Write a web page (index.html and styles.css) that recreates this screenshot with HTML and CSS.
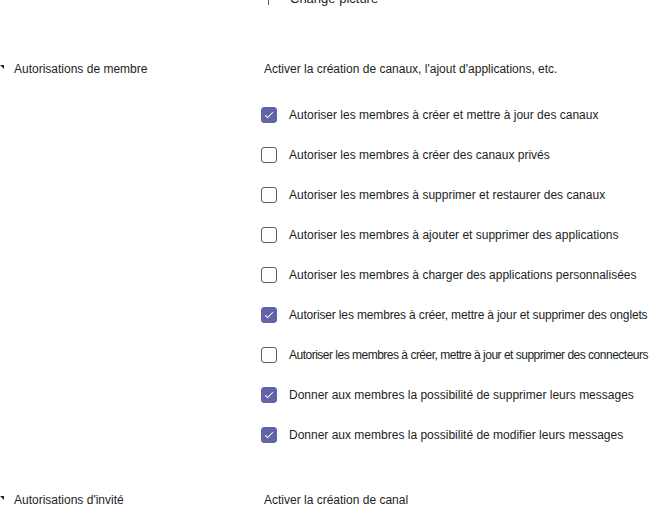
FILE: index.html
```html
<!DOCTYPE html>
<html lang="fr">
<head>
    <meta charset="UTF-8">
    <meta name="viewport" content="width=device-width, initial-scale=1.0">
    <title>Paramètres de l'équipe</title>
    <link rel="stylesheet" href="styles.css">
</head>
<body>
    <div class="picture-row">
        <span class="divider"></span>
        <span class="change-picture">Change picture</span>
    </div>

    <div class="settings-section">
        <div class="section-title">
            <span class="caret"></span>
            Autorisations de membre
        </div>
        <div class="section-body">
            <div class="section-desc">Activer la création de canaux, l'ajout d'applications, etc.</div>

            <label class="option"><input type="checkbox" checked><span class="box"></span><span>Autoriser les membres à créer et mettre à jour des canaux</span></label>
            <label class="option"><input type="checkbox"><span class="box"></span><span>Autoriser les membres à créer des canaux privés</span></label>
            <label class="option"><input type="checkbox"><span class="box"></span><span>Autoriser les membres à supprimer et restaurer des canaux</span></label>
            <label class="option"><input type="checkbox"><span class="box"></span><span>Autoriser les membres à ajouter et supprimer des applications</span></label>
            <label class="option"><input type="checkbox"><span class="box"></span><span>Autoriser les membres à charger des applications personnalisées</span></label>
            <label class="option"><input type="checkbox" checked><span class="box"></span><span class="tight">Autoriser les membres à créer, mettre à jour et supprimer des onglets</span></label>
            <label class="option"><input type="checkbox"><span class="box"></span><span class="tighter">Autoriser les membres à créer, mettre à jour et supprimer des connecteurs</span></label>
            <label class="option"><input type="checkbox" checked><span class="box"></span><span>Donner aux membres la possibilité de supprimer leurs messages</span></label>
            <label class="option"><input type="checkbox" checked><span class="box"></span><span>Donner aux membres la possibilité de modifier leurs messages</span></label>
        </div>
    </div>

    <div class="settings-section guest">
        <div class="section-title">
            <span class="caret"></span>
            Autorisations d'invité
        </div>
        <div class="section-body">
            <div class="section-desc">Activer la création de canal</div>
        </div>
    </div>
</body>
</html>
```

FILE: styles.css
```css
body {
    margin: 0;
    font-family: 'Liberation Sans', Arial, sans-serif;
    font-size: 12px;
    color: #201f1e;
    background-color: white;
    overflow: hidden;
}

.picture-row {
    display: flex;
    align-items: flex-start;
    height: 5px;
    margin-top: -8px;
    padding-left: 268px;
}

.divider {
    width: 1px;
    height: 13px;
    background-color: #605e5c;
}

.change-picture {
    margin-left: 21px;
    font-size: 13px;
    line-height: 13px;
}

.settings-section {
    display: flex;
    margin-top: 63px;
}

.settings-section.guest {
    margin-top: 36px;
}

.section-title {
    width: 264px;
    flex: 0 0 264px;
    display: flex;
    align-items: center;
    height: 18px;
}

.caret {
    width: 0;
    height: 0;
    margin: 0 10px 0 0;
    border-top: 4px solid #201f1e;
    border-left: 4px solid transparent;
    position: relative;
    top: -2px;
}

.section-body {
    flex: 1;
}

.section-desc {
    height: 18px;
    line-height: 18px;
    margin-bottom: 17px;
}

.option {
    display: flex;
    align-items: center;
    height: 40px;
    margin-left: -3px;
    white-space: nowrap;
}

.option input {
    display: none;
}

.tight {
    letter-spacing: -0.15px;
}

.tighter {
    letter-spacing: -0.5px;
}

.box {
    box-sizing: border-box;
    width: 16px;
    height: 16px;
    margin-right: 12px;
    border: 1px solid #605e5c;
    border-radius: 3px;
    background-color: white;
    display: flex;
    align-items: center;
    justify-content: center;
}

.option input:checked + .box {
    border-color: #6264a7;
    background-color: #6264a7;
}

.option input:checked + .box::after {
    content: '';
    width: 7px;
    height: 3px;
    margin-top: -3px;
    border-left: 1.5px solid white;
    border-bottom: 1.5px solid white;
    transform: rotate(-45deg);
}
```
